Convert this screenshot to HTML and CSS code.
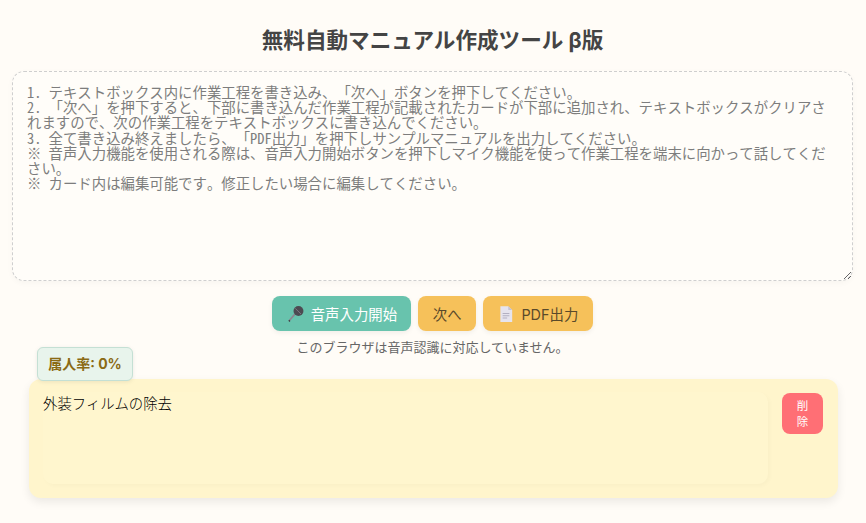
FILE: index.html
```html
<!DOCTYPE html>
<html lang="ja">
<head>
<meta charset="utf-8">
<title>無料自動マニュアル作成ツール β版</title>
<link rel="stylesheet" href="styles.css">
</head>
<body>
<main class="page">
  <h1 class="title">無料自動マニュアル作成ツール β版</h1>
  <textarea class="main-input" placeholder="1. テキストボックス内に作業工程を書き込み、「次へ」ボタンを押下してください。&#10;2. 「次へ」を押下すると、下部に書き込んだ作業工程が記載されたカードが下部に追加され、テキストボックスがクリアされますので、次の作業工程をテキストボックスに書き込んでください。&#10;3. 全て書き込み終えましたら、「PDF出力」を押下しサンプルマニュアルを出力してください。&#10;※ 音声入力機能を使用される際は、音声入力開始ボタンを押下しマイク機能を使って作業工程を端末に向かって話してください。&#10;※ カード内は編集可能です。修正したい場合に編集してください。"></textarea>
  <div class="actions">
    <button class="btn btn-teal" type="button">
      <svg class="icon" viewBox="0 0 16 16" aria-hidden="true">
        <path d="M7.4 8.8 2.4 14.4l-1-.9L6.4 7.6z" fill="#8a8790"/>
        <path d="M2 13.2l1 1-.8.8-1-1z" fill="#3f3d44"/>
        <circle cx="10.2" cy="5.3" r="4.4" fill="#4d4a52"/>
        <path d="M7.4 3 12.4 8" stroke="#807d86" stroke-width=".8"/>
      </svg>
      <span>音声入力開始</span>
    </button>
    <button class="btn btn-amber" type="button"><span>次へ</span></button>
    <button class="btn btn-amber" type="button">
      <svg class="icon" viewBox="0 0 16 16" aria-hidden="true">
        <path d="M3 1h7l3.5 3.5V15H3z" fill="#e6e4ee"/>
        <path d="M10 1l3.5 3.5H10z" fill="#c6c3d2"/>
        <path d="M5 7.5h6M5 9.5h6M5 11.5h4" stroke="#b3b0c2" stroke-width=".9"/>
      </svg>
      <span>PDF出力</span>
    </button>
  </div>
  <p class="status">このブラウザは音声認識に対応していません。</p>
  <section class="card">
    <div class="badge">属人率: 0%</div>
    <textarea class="card-input">外装フィルムの除去</textarea>
    <button class="delete" type="button">削除</button>
  </section>
</main>
</body>
</html>
```
FILE: styles.css
```css
* { box-sizing: border-box; }
html, body { margin: 0; height: 100%; }
body {
  background: #fffcf7;
  font-family: "Inter", "Noto Sans CJK JP", sans-serif;
  color: #444;
  overflow: hidden;
  text-spacing-trim: space-all;
}
.page {
  display: flex;
  flex-direction: column;
  padding: 0 13px 0 12px;
}
.title {
  margin: 26px 0 0;
  height: 45px;
  text-align: center;
  font-size: 21.6px;
  line-height: 28px;
  font-weight: 700;
  color: #444;
}
.main-input {
  display: block;
  width: 100%;
  height: 210px;
  padding: 12px 14px;
  border: 1px dashed #cfcfcf;
  border-radius: 12px;
  background: #fffdf9;
  box-shadow: 0 2px 6px rgba(0, 0, 0, 0.03);
  font-family: "Noto Sans Mono CJK JP", "Liberation Mono", "Noto Sans CJK JP", monospace;
  font-size: 14.4px;
  font-weight: 300;
  line-height: 15.2px;
  color: #444;
  outline: none;
  text-spacing-trim: space-all;
}
.main-input::placeholder { color: #7d7d7d; opacity: 1; }
.actions {
  display: flex;
  justify-content: center;
  gap: 7px;
  margin-top: 15px;
}
.btn {
  display: flex;
  align-items: center;
  justify-content: center;
  gap: 6px;
  height: 35px;
  padding: 0 14.4px;
  border: 0;
  border-radius: 8px;
  font-family: inherit;
  font-size: 14.4px;
  box-shadow: 0 2px 5px rgba(0, 0, 0, 0.06);
}
.btn-teal { background: #68c3ad; color: #fff; }
.btn-amber { background: #f6c15a; color: #5a4a2a; }
.icon { width: 18px; height: 18px; flex: none; }
.status {
  margin: 7px 0 0;
  height: 18px;
  text-align: center;
  font-size: 13px;
  line-height: 18px;
  color: #666;
}
.card {
  position: relative;
  display: flex;
  align-items: flex-start;
  margin: 23px 15px 0 17px;
  height: 119px;
  padding: 13px 15px 13px 14px;
  background: #fff5cc;
  border-radius: 12px;
  box-shadow: 0 4px 10px rgba(0, 0, 0, 0.08);
}
.badge {
  position: absolute;
  left: 8px;
  top: -32px;
  width: 96px;
  height: 34px;
  padding-bottom: 2px;
  display: flex;
  align-items: center;
  justify-content: center;
  background: #e8f4ec;
  border: 1px solid #c4e0d4;
  border-radius: 6px;
  box-shadow: 0 1px 4px rgba(0, 0, 0, 0.08);
  font-size: 14px;
  font-weight: 700;
  color: #8a6a14;
}
.card-input {
  flex: 1;
  height: 92px;
  margin-right: 14px;
  padding: 0;
  border: 0;
  border-radius: 10px;
  background: #fff6ce;
  box-shadow: 2px 2px 4px rgba(0, 0, 0, 0.025);
  font-family: "Noto Sans CJK JP", sans-serif;
  font-size: 14.4px;
  font-weight: 300;
  line-height: 21px;
  color: #000;
  resize: none;
  outline: none;
}
.delete {
  flex: none;
  width: 41px;
  height: 41px;
  margin-top: 1px;
  padding: 0 11px 1px;
  border: 0;
  border-radius: 8px;
  background: #ff6f75;
  color: #fff;
  font-family: "Noto Sans CJK JP", sans-serif;
  font-size: 11.5px;
  line-height: 16px;
}
```
